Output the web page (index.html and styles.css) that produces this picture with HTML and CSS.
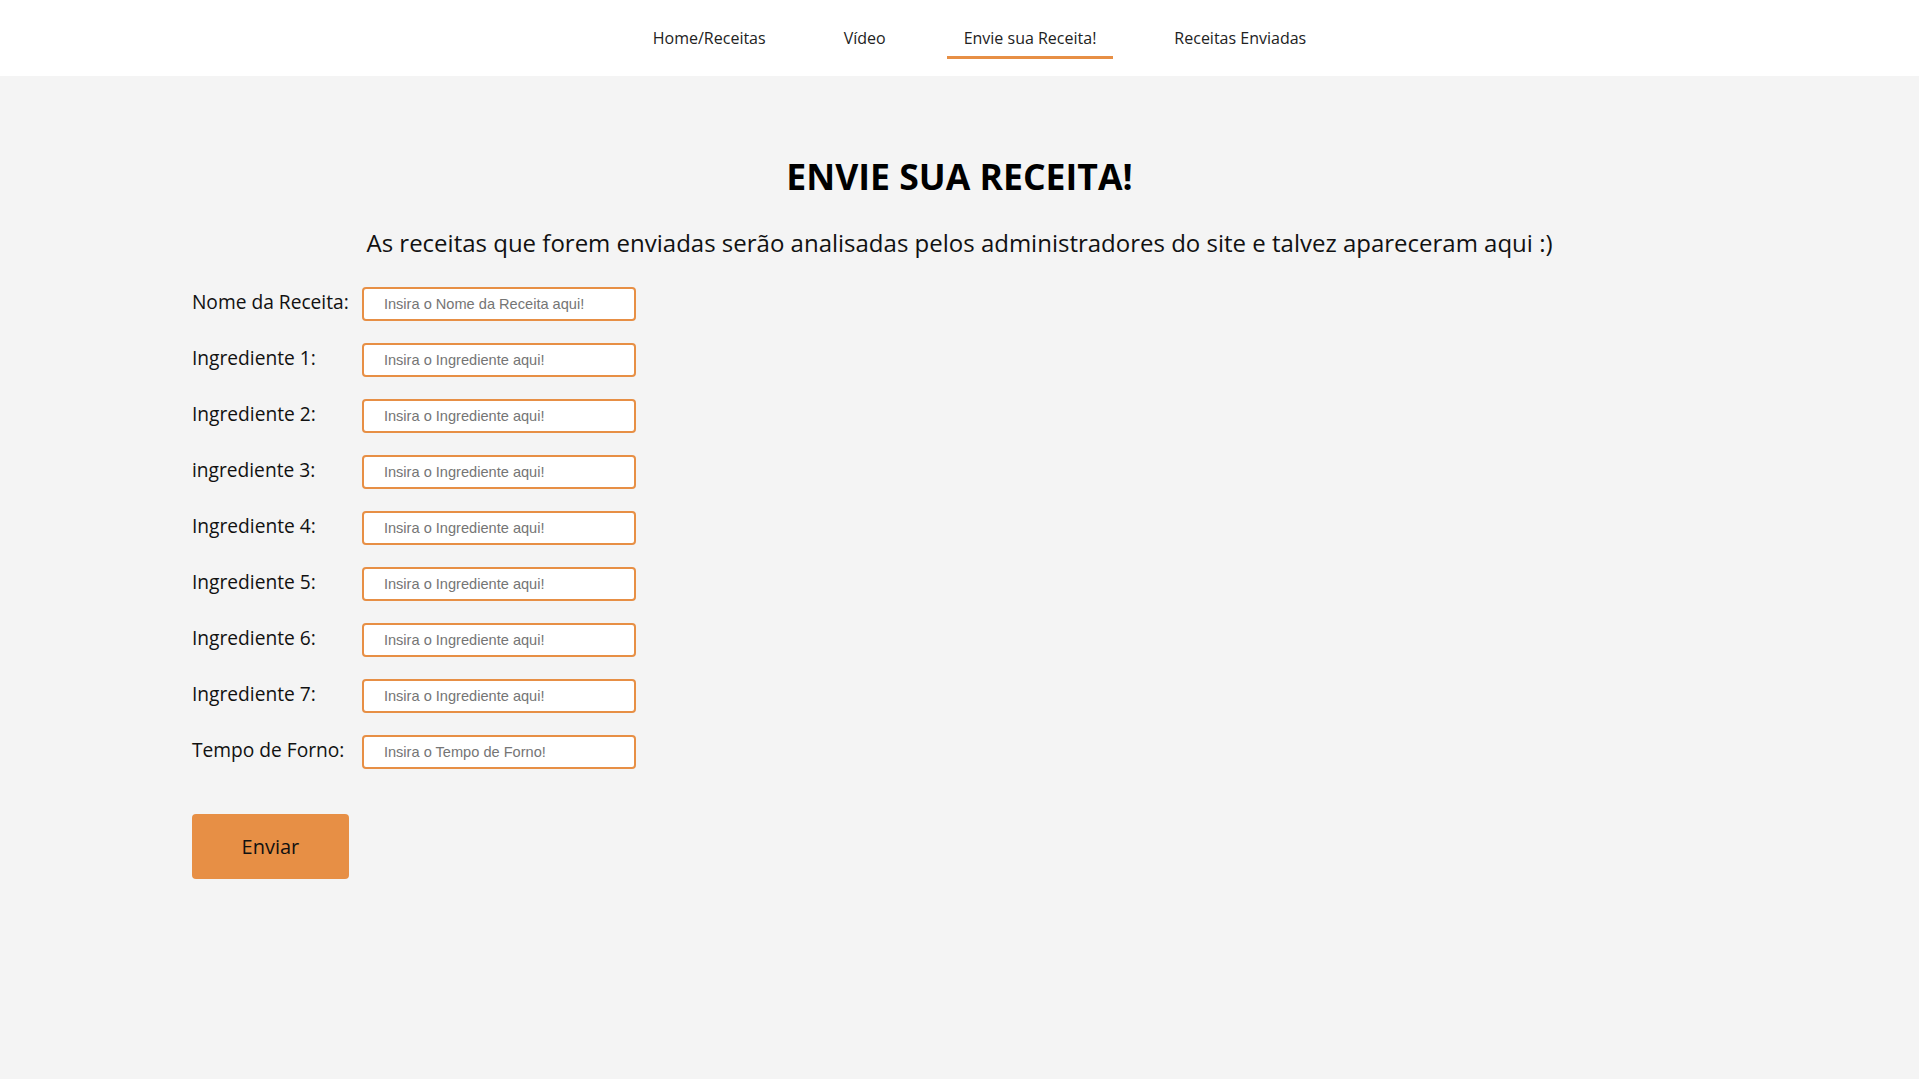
FILE: index.html
```html
<!DOCTYPE html>
<html lang="pt-BR">
<head>
<meta charset="utf-8">
<title>Envie sua Receita!</title>
<link rel="stylesheet" href="styles.css">
</head>
<body>
<header class="topbar">
  <nav class="nav">
    <a class="nav-link" href="#">Home/Receitas</a>
    <a class="nav-link" href="#">Vídeo</a>
    <a class="nav-link active" href="#">Envie sua Receita!</a>
    <a class="nav-link" href="#">Receitas Enviadas</a>
  </nav>
</header>
<main class="content">
  <h1 class="title">ENVIE SUA RECEITA!</h1>
  <p class="subtitle">As receitas que forem enviadas serão analisadas pelos administradores do site e talvez apareceram aqui :)</p>
  <form class="form">
    <div class="row"><label class="label">Nome da Receita:</label><input class="field" type="text" placeholder="Insira o Nome da Receita aqui!"></div>
    <div class="row"><label class="label">Ingrediente 1:</label><input class="field" type="text" placeholder="Insira o Ingrediente aqui!"></div>
    <div class="row"><label class="label">Ingrediente 2:</label><input class="field" type="text" placeholder="Insira o Ingrediente aqui!"></div>
    <div class="row"><label class="label">ingrediente 3:</label><input class="field" type="text" placeholder="Insira o Ingrediente aqui!"></div>
    <div class="row"><label class="label">Ingrediente 4:</label><input class="field" type="text" placeholder="Insira o Ingrediente aqui!"></div>
    <div class="row"><label class="label">Ingrediente 5:</label><input class="field" type="text" placeholder="Insira o Ingrediente aqui!"></div>
    <div class="row"><label class="label">Ingrediente 6:</label><input class="field" type="text" placeholder="Insira o Ingrediente aqui!"></div>
    <div class="row"><label class="label">Ingrediente 7:</label><input class="field" type="text" placeholder="Insira o Ingrediente aqui!"></div>
    <div class="row"><label class="label">Tempo de Forno:</label><input class="field" type="text" placeholder="Insira o Tempo de Forno!"></div>
    <button class="submit" type="button">Enviar</button>
  </form>
</main>
</body>
</html>
```
FILE: styles.css
```css
* { box-sizing: border-box; }
html, body { margin: 0; padding: 0; }
body {
  background: #f4f4f4;
  font-family: "Open Sans", "Liberation Sans", sans-serif;
  color: #111;
  min-height: 100vh;
}
.topbar {
  background: #ffffff;
  height: 76px;
}
.nav {
  display: flex;
  justify-content: center;
  padding-left: 40px;
  gap: 44px;
}
.nav-link {
  display: block;
  padding: 27px 17px 7px;
  border-bottom: 3px solid transparent;
  font-size: 16px;
  line-height: 22px;
  color: #222;
  text-decoration: none;
}
.nav-link.active { border-bottom-color: #e78f45; }
.content {
  padding: 0 10%;
}
.title {
  margin: 76px 0 0;
  text-align: center;
  font-size: 35.6px;
  font-weight: 700;
  line-height: 48px;
  color: #000;
}
.subtitle {
  margin: 26px 0 0;
  text-align: center;
  font-size: 24px;
  line-height: 33px;
  color: #111;
}
.form {
  display: flex;
  flex-direction: column;
  gap: 22px;
  margin-top: 28px;
}
.row {
  display: flex;
  align-items: flex-start;
}
.label {
  flex: 0 0 170px;
  padding-top: 1px;
  font-size: 19.2px;
  line-height: 27px;
  color: #111;
}
.field {
  width: 274px;
  height: 34px;
  border: 2px solid #e78f45;
  border-radius: 4px;
  background: #fff;
  padding: 0 18px 1px 20px;
  font-family: "Liberation Sans", Arial, sans-serif;
  font-size: 14.6px;
  color: #333;
  outline: none;
}
.field::placeholder { color: #757575; }
.submit {
  align-self: flex-start;
  margin-top: 23px;
  width: 157px;
  height: 65px;
  border: none;
  border-radius: 4px;
  background: #e78f45;
  font-family: "Open Sans", "Liberation Sans", sans-serif;
  font-size: 20px;
  color: #111;
  cursor: pointer;
}
```
